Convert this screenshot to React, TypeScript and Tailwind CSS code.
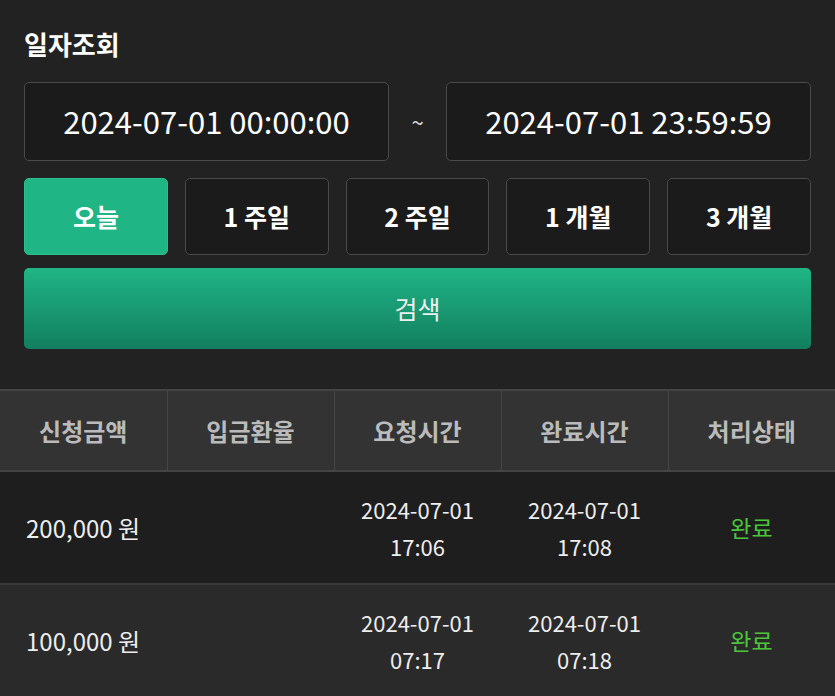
import React from 'react';

const periods = ['오늘', '1 주일', '2 주일', '1 개월', '3 개월'];

const rows = [
  { amount: '200,000 원', rate: '', req: ['2024-07-01', '17:06'], done: ['2024-07-01', '17:08'], status: '완료' },
  { amount: '100,000 원', rate: '', req: ['2024-07-01', '07:17'], done: ['2024-07-01', '07:18'], status: '완료' },
];

export default function App() {
  const font = { fontFamily: '"Noto Sans CJK KR", "Noto Sans", sans-serif' };
  return (
    <div className="w-[835px] h-[696px] overflow-hidden bg-[#222222] text-[#eeeeee]" style={font}>
      <section className="px-6 pt-[25px] pb-[40px]">
        {/* 제목 */}
        <h2 className="text-[26px] font-bold leading-[38px] text-white">일자조회</h2>

        {/* 날짜 입력 */}
        <div className="mt-[19px] flex items-center gap-0">
          <div className="flex h-[79px] w-[365px] items-center justify-center rounded-[5px] border border-[#4a4a4a] bg-[#1b1b1b] text-[31px] text-white">
            2024-07-01 00:00:00
          </div>
          <div className="flex-1 text-center text-[22px] text-[#dddddd]">~</div>
          <div className="flex h-[79px] w-[365px] items-center justify-center rounded-[5px] border border-[#4a4a4a] bg-[#1b1b1b] text-[31px] text-white">
            2024-07-01 23:59:59
          </div>
        </div>

        {/* 기간 버튼 */}
        <div className="mt-[17px] grid grid-cols-5 gap-[17px]">
          {periods.map((p, i) => (
            <button
              key={p}
              className={`h-[77px] rounded-[5px] border text-[25px] font-bold text-white ${
                i === 0 ? 'border-[#2bbf8d] bg-[#20b585]' : 'border-[#4a4a4a] bg-[#1b1b1b]'
              }`}
            >
              {p}
            </button>
          ))}
        </div>

        {/* 검색 */}
        <button className="mt-[13px] h-[81px] w-full rounded-[5px] bg-gradient-to-b from-[#20b585] to-[#127f5f] text-[25px] text-[#eeeeee]">
          검색
        </button>
      </section>

      {/* 결과 테이블 */}
      <table className="w-full table-fixed border-collapse">
        <thead>
          <tr className="h-[81px] border-y-2 border-[#444444] bg-[#333333] text-[24px] font-bold text-[#bbbbbb]">
            {['신청금액', '입금환율', '요청시간', '완료시간', '처리상태'].map((h, i) => (
              <th key={h} className={`font-bold ${i > 0 ? 'border-l border-[#454545]' : ''}`}>
                {h}
              </th>
            ))}
          </tr>
        </thead>
        <tbody>
          {rows.map((r, i) => (
            <tr
              key={i}
              className={`h-[113px] border-b-2 border-[#3a3a3a] text-[22px] ${i % 2 === 0 ? 'bg-[#1e1e1e]' : 'bg-[#2a2a2a]'}`}
            >
              <td className="pl-[26px] text-left text-[24px]">{r.amount}</td>
              <td className="text-center">{r.rate}</td>
              <td className="text-center leading-[37px]">
                {r.req[0]}
                <br />
                {r.req[1]}
              </td>
              <td className="text-center leading-[37px]">
                {r.done[0]}
                <br />
                {r.done[1]}
              </td>
              <td className="text-center text-[23px] text-[#4cc53a]">{r.status}</td>
            </tr>
          ))}
        </tbody>
      </table>
    </div>
  );
}
